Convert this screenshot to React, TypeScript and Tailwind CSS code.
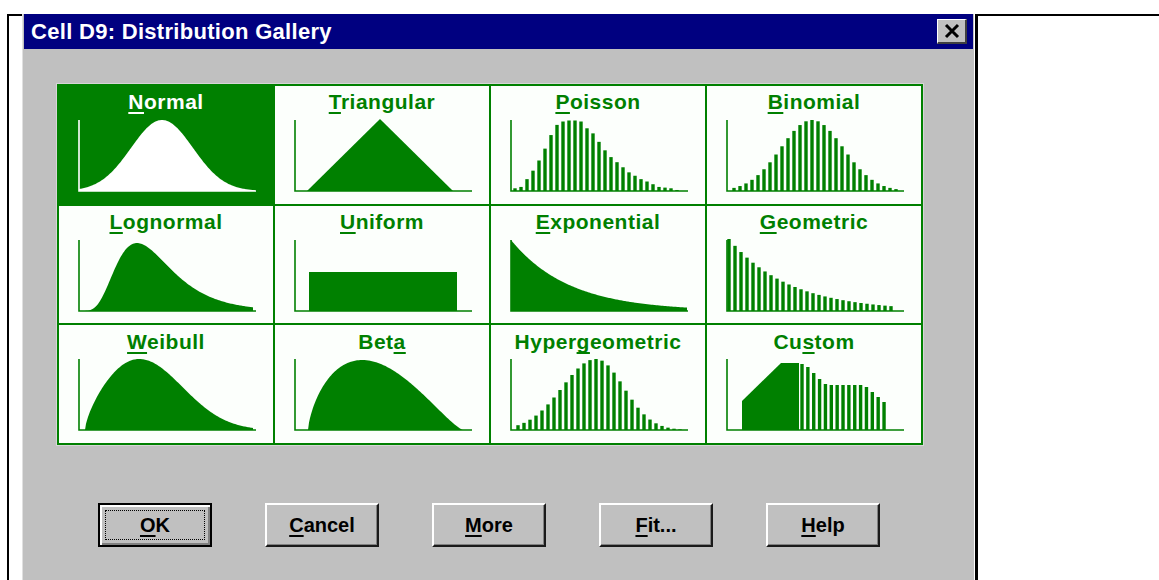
import type { ReactNode } from "react"

const G = "#008000"
const BASE = 73

type Pt = [number, number]

// filled area through (x, height) points, closed on the baseline
function area(pts: Pt[]): string {
  let d = `M${pts[0][0]} ${BASE}`
  for (const [x, h] of pts) d += ` L${x.toFixed(2)} ${(BASE - h).toFixed(2)}`
  d += ` L${pts[pts.length - 1][0]} ${BASE} Z`
  return d
}

// sample f over [x0, x1] and scale so that its peak is `top`
function curve(x0: number, x1: number, top: number, f: (x: number) => number): Pt[] {
  const xs: number[] = []
  for (let x = x0; x <= x1 + 0.001; x += 1) xs.push(x)
  const ys = xs.map(f)
  const max = Math.max(...ys)
  return xs.map((x, i) => [x, (ys[i] / max) * top])
}

function Axes({ color = G }: { color?: string }) {
  return <path d={`M20 2 V${BASE} H197`} stroke={color} strokeWidth="1.6" fill="none" />
}

function Bars({ xs, hs }: { xs: number[]; hs: number[] }) {
  return (
    <>
      {xs.map((x, i) => (
        <rect key={i} x={x - 1.7} y={BASE - hs[i]} width="3.4" height={hs[i]} fill={G} />
      ))}
    </>
  )
}

const range = (n: number) => Array.from({ length: n }, (_, i) => i)

function NormalChart() {
  const pts = curve(20, 196, 71, (x) => Math.exp(-((x - 103) ** 2) / (2 * 31 * 31)))
  return (
    <>
      <path d={area(pts)} fill="#ffffff" />
      <Axes color="#ffffff" />
    </>
  )
}

function TriangularChart() {
  return (
    <>
      <polygon points={`32,${BASE} 105,1 178,${BASE}`} fill={G} />
      <Axes />
    </>
  )
}

const poissonH = [8, 12, 35, 60, 90, 125, 165, 195, 205, 208, 208, 205, 185, 170, 145, 120, 100, 85, 70, 55, 45, 35, 28, 20, 12, 10, 8, 3].map(
  (v) => v / 2.95,
)

function PoissonChart() {
  return (
    <>
      <Bars xs={poissonH.map((_, i) => 24 + i * 6)} hs={poissonH} />
      <Axes />
    </>
  )
}

function BinomialChart() {
  const idx = range(28)
  return (
    <>
      <Bars xs={idx.map((i) => 27 + i * 6)} hs={idx.map((i) => 71 * Math.exp(-((i - 13) ** 2) / (2 * 5.2 * 5.2)))} />
      <Axes />
    </>
  )
}

function LognormalChart() {
  const mu = Math.log(66) + 0.42 * 0.42
  const pts = curve(21, 194, 68, (x) => {
    const t = x - 12
    return Math.exp(-((Math.log(t) - mu) ** 2) / (2 * 0.42 * 0.42)) / t
  })
  return (
    <>
      <path d={area(pts)} fill={G} />
      <Axes />
    </>
  )
}

function UniformChart() {
  return (
    <>
      <rect x="34" y={BASE - 39} width="148" height="39" fill={G} />
      <Axes />
    </>
  )
}

function ExponentialChart() {
  const pts = curve(20, 196, 71, (x) => Math.exp(-(x - 20) / 58))
  return (
    <>
      <path d={area(pts)} fill={G} />
      <Axes />
    </>
  )
}

function GeometricChart() {
  const idx = range(28)
  return (
    <>
      <Bars xs={idx.map((i) => 22 + i * 6)} hs={idx.map((i) => 72 * Math.pow(0.905, i))} />
      <Axes />
    </>
  )
}

function WeibullChart() {
  const pts = curve(26, 194, 71, (x) => {
    const t = x - 26
    return Math.pow(t, 0.68) * Math.exp(-Math.pow(t / 91.5, 2.5))
  })
  return (
    <>
      <path d={area(pts)} fill={G} />
      <Axes />
    </>
  )
}

function BetaChart() {
  const pts = curve(33, 188, 70, (x) => {
    const u = (x - 33) / 155
    return Math.pow(u, 0.7) * Math.pow(1 - u, 1.3)
  })
  return (
    <>
      <path d={area(pts)} fill={G} />
      <Axes />
    </>
  )
}

function HyperChart() {
  const idx = range(28)
  const h = idx.map((i) => {
    const s = i < 13 ? 5.6 : 4.6
    return 71 * Math.exp(-((i - 13) ** 2) / (2 * s * s))
  })
  return (
    <>
      <Bars xs={idx.map((i) => 27 + i * 6)} hs={h} />
      <Axes />
    </>
  )
}

function CustomChart() {
  const hs = [66, 63, 57, 51, 46, 45, 45, 45, 45, 45, 45, 43, 38, 33, 28]
  return (
    <>
      <polygon points={`35,${BASE} 35,${BASE - 29} 74,${BASE - 67} 92,${BASE - 67} 92,${BASE}`} fill={G} />
      <Bars xs={hs.map((_, i) => 95 + i * 5.86)} hs={hs} />
      <Axes />
    </>
  )
}

const cells: { name: string; u: number; chart: ReactNode; selected?: boolean }[] = [
  { name: "Normal", u: 0, chart: <NormalChart />, selected: true },
  { name: "Triangular", u: 0, chart: <TriangularChart /> },
  { name: "Poisson", u: 0, chart: <PoissonChart /> },
  { name: "Binomial", u: 0, chart: <BinomialChart /> },
  { name: "Lognormal", u: 0, chart: <LognormalChart /> },
  { name: "Uniform", u: 0, chart: <UniformChart /> },
  { name: "Exponential", u: 0, chart: <ExponentialChart /> },
  { name: "Geometric", u: 0, chart: <GeometricChart /> },
  { name: "Weibull", u: 0, chart: <WeibullChart /> },
  { name: "Beta", u: 3, chart: <BetaChart /> },
  { name: "Hypergeometric", u: 5, chart: <HyperChart /> },
  { name: "Custom", u: 2, chart: <CustomChart /> },
]

function Mnemonic({ text, u }: { text: string; u: number }) {
  return (
    <span>
      {text.slice(0, u)}
      <span className="underline decoration-2 underline-offset-[3px] [text-decoration-skip-ink:none]">{text[u]}</span>
      {text.slice(u + 1)}
    </span>
  )
}

function Button({ label, u, isDefault }: { label: string; u: number; isDefault?: boolean }) {
  if (isDefault) {
    return (
      <div className="w-[114px] h-[44px] border-2 border-black bg-[#c0c0c0] shadow-[inset_2px_2px_0_#ffffff,inset_-2px_-2px_0_#808080] p-[5px]">
        <div className="h-full border border-dotted border-black flex items-center justify-center text-[20px] font-bold text-black">
          <Mnemonic text={label} u={u} />
        </div>
      </div>
    )
  }
  return (
    <div className="w-[114px] h-[44px] bg-[#c0c0c0] border-t-2 border-l-2 border-t-white border-l-white border-b-2 border-r-2 border-b-[#1a1a1a] border-r-[#1a1a1a] shadow-[inset_-1px_-1px_0_#808080] flex items-center justify-center text-[20px] font-bold text-black">
      <Mnemonic text={label} u={u} />
    </div>
  )
}

export default function App() {
  return (
    <div className="w-[1159px] h-[580px] bg-white flex pt-[14px] overflow-hidden font-['Liberation_Sans',Arial,sans-serif]">
      <div className="ml-[7px] w-[15px] border-l-2 border-t-2 border-black" />

      <div className="w-[952px] bg-[#c0c0c0] flex flex-col px-px border-l border-[#e0e0e0]">
        <div className="h-[35px] bg-[#000080] flex items-center justify-between pl-[7px] pr-[6px]">
          <span className="text-white font-bold text-[22px] tracking-[0.3px]">Cell D9: Distribution Gallery</span>
          <div className="w-[30px] h-[25px] bg-[#c0c0c0] border-t border-l border-white border-b-2 border-r-2 border-b-[#404040] border-r-[#404040] flex items-center justify-center">
            <svg width="18" height="16" viewBox="0 0 18 16">
              <path d="M3 2 L15 14 M15 2 L3 14" stroke="#000" strokeWidth="3" />
            </svg>
          </div>
        </div>

        <div className="mt-[35px] ml-[33px] w-[866px] h-[361px] grid grid-cols-4 grid-rows-3 gap-[2px] bg-[#008000] border-2 border-[#008000] shadow-[0_0_0_1px_#d6d6d6]">
          {cells.map((c) => (
            <div key={c.name} className={`flex flex-col ${c.selected ? "bg-[#008000]" : "bg-[#fcfffc]"}`}>
              <div
                className={`h-[32px] flex items-center justify-center text-[21px] font-bold tracking-[0.5px] ${
                  c.selected ? "text-white" : "text-[#008000]"
                }`}
              >
                <Mnemonic text={c.name} u={c.u} />
              </div>
              <svg width="214" height="80" viewBox="0 0 214 80">
                {c.chart}
              </svg>
            </div>
          ))}
        </div>

        <div className="mt-[58px] ml-[74px] flex gap-[53px]">
          <Button label="OK" u={0} isDefault />
          <Button label="Cancel" u={0} />
          <Button label="More" u={0} />
          <Button label="Fit..." u={0} />
          <Button label="Help" u={0} />
        </div>
      </div>

      <div className="ml-px flex-1 border-l-[3px] border-t-2 border-black" />
    </div>
  )
}
